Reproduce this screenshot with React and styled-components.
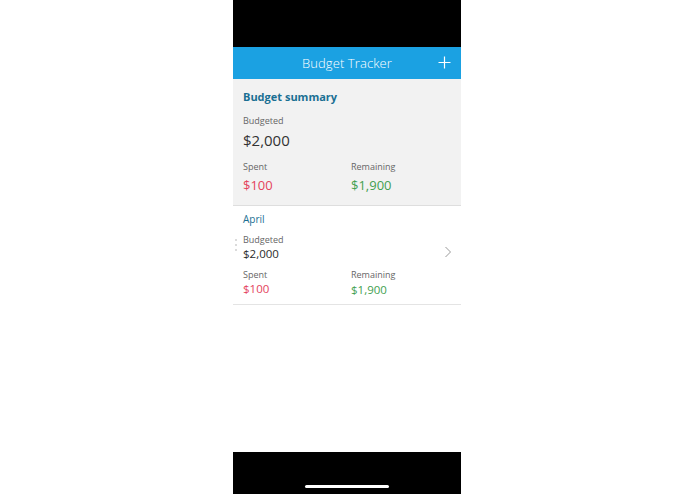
import React from "react";
import styled, { createGlobalStyle } from "styled-components";

const Global = createGlobalStyle`
  html, body { margin: 0; padding: 0; background: #ffffff; }
  body { font-family: "Open Sans", "Noto Sans", sans-serif; }
  * { box-sizing: border-box; }
`;

const Page = styled.div`
  width: 695px;
  height: 494px;
  display: flex;
  justify-content: flex-start;
  padding-left: 233px;
  background: #ffffff;
`;

const Phone = styled.div`
  width: 228px;
  height: 494px;
  display: flex;
  flex-direction: column;
  background: #ffffff;
`;

const StatusBar = styled.div`
  height: 47px;
  background: #000000;
`;

const Header = styled.div`
  height: 32px;
  background: #1ba1e2;
  display: flex;
  align-items: center;
  justify-content: center;
  position: relative;
`;

const Title = styled.div`
  color: #ffffff;
  font-size: 13px;
  font-weight: 300;
  letter-spacing: 0.1px;
`;

const AddButton = styled.div`
  position: absolute;
  right: 10px;
  top: 9px;
  width: 13px;
  height: 13px;
  display: flex;
`;

const Content = styled.div`
  flex: 1;
  display: flex;
  flex-direction: column;
`;

const Summary = styled.div`
  background: #f2f2f2;
  padding: 11px 10px 11px 10px;
  border-bottom: 1px solid #dedede;
`;

const SummaryTitle = styled.div`
  color: #1a6f93;
  font-size: 11px;
  font-weight: 700;
  line-height: 14px;
`;

const Label = styled.div`
  color: #666666;
  font-size: 9px;
  line-height: 12px;
  margin-top: ${(p) => p.$mt || 0}px;
`;

const Amount = styled.div`
  color: ${(p) => p.$color || "#333333"};
  font-size: ${(p) => p.$size}px;
  line-height: ${(p) => p.$lh}px;
  margin-top: ${(p) => p.$mt || 0}px;
  font-weight: ${(p) => p.$weight || 400};
`;

const Columns = styled.div`
  display: grid;
  grid-template-columns: 108px 1fr;
  margin-top: ${(p) => p.$mt || 0}px;
`;

const Column = styled.div`
  display: flex;
  flex-direction: column;
`;

const MonthRow = styled.div`
  position: relative;
  padding: 6px 10px 6px 10px;
  border-bottom: 1px solid #e4e4e4;
`;

const MonthName = styled.div`
  color: #1a6f93;
  font-size: 10px;
  line-height: 14px;
`;

const Grip = styled.div`
  position: absolute;
  left: 2px;
  top: 33px;
  display: flex;
  flex-direction: column;
  gap: 3px;
`;

const Dot = styled.span`
  width: 2px;
  height: 2px;
  border-radius: 50%;
  background: #cfcfcf;
`;

const Chevron = styled.div`
  position: absolute;
  right: 9px;
  top: 40px;
  width: 8px;
  height: 12px;
  display: flex;
`;

const BottomBar = styled.div`
  height: 42px;
  background: #000000;
  display: flex;
  justify-content: center;
  align-items: flex-start;
  padding-top: 33px;
`;

const HomeIndicator = styled.div`
  width: 84px;
  height: 3px;
  border-radius: 2px;
  background: #ffffff;
`;

const RED = "#e4435c";
const GREEN = "#43a050";

export default function App() {
  return (
    <Page>
      <Global />
      <Phone>
        <StatusBar />
        <Header>
          <Title>Budget Tracker</Title>
          <AddButton>
            <svg width="13" height="13" viewBox="0 0 13 13">
              <path d="M6.5 0.5v12M0.5 6.5h12" stroke="#ffffff" strokeWidth="1.2" fill="none" />
            </svg>
          </AddButton>
        </Header>
        <Content>
          <Summary>
            <SummaryTitle>Budget summary</SummaryTitle>
            <Label $mt={11}>Budgeted</Label>
            <Amount $size={15} $lh={20} $mt={3}>$2,000</Amount>
            <Columns $mt={11}>
              <Column>
                <Label>Spent</Label>
                <Amount $size={13} $lh={18} $mt={3} $color={RED}>$100</Amount>
              </Column>
              <Column>
                <Label>Remaining</Label>
                <Amount $size={13} $lh={18} $mt={3} $color={GREEN}>$1,900</Amount>
              </Column>
            </Columns>
          </Summary>
          <MonthRow>
            <Grip>
              <Dot />
              <Dot />
              <Dot />
            </Grip>
            <MonthName>April</MonthName>
            <Label $mt={8}>Budgeted</Label>
            <Amount $size={11.5} $lh={16} $color="#2b2b2b">$2,000</Amount>
            <Columns $mt={7}>
              <Column>
                <Label>Spent</Label>
                <Amount $size={11.5} $lh={16} $color={RED}>$100</Amount>
              </Column>
              <Column>
                <Label>Remaining</Label>
                <Amount $size={11.5} $lh={16} $mt={1} $color={GREEN}>$1,900</Amount>
              </Column>
            </Columns>
            <Chevron>
              <svg width="8" height="12" viewBox="0 0 8 12">
                <path d="M1.5 1l5 5-5 5" stroke="#9a9a9a" strokeWidth="1" fill="none" />
              </svg>
            </Chevron>
          </MonthRow>
        </Content>
        <BottomBar>
          <HomeIndicator />
        </BottomBar>
      </Phone>
    </Page>
  );
}
